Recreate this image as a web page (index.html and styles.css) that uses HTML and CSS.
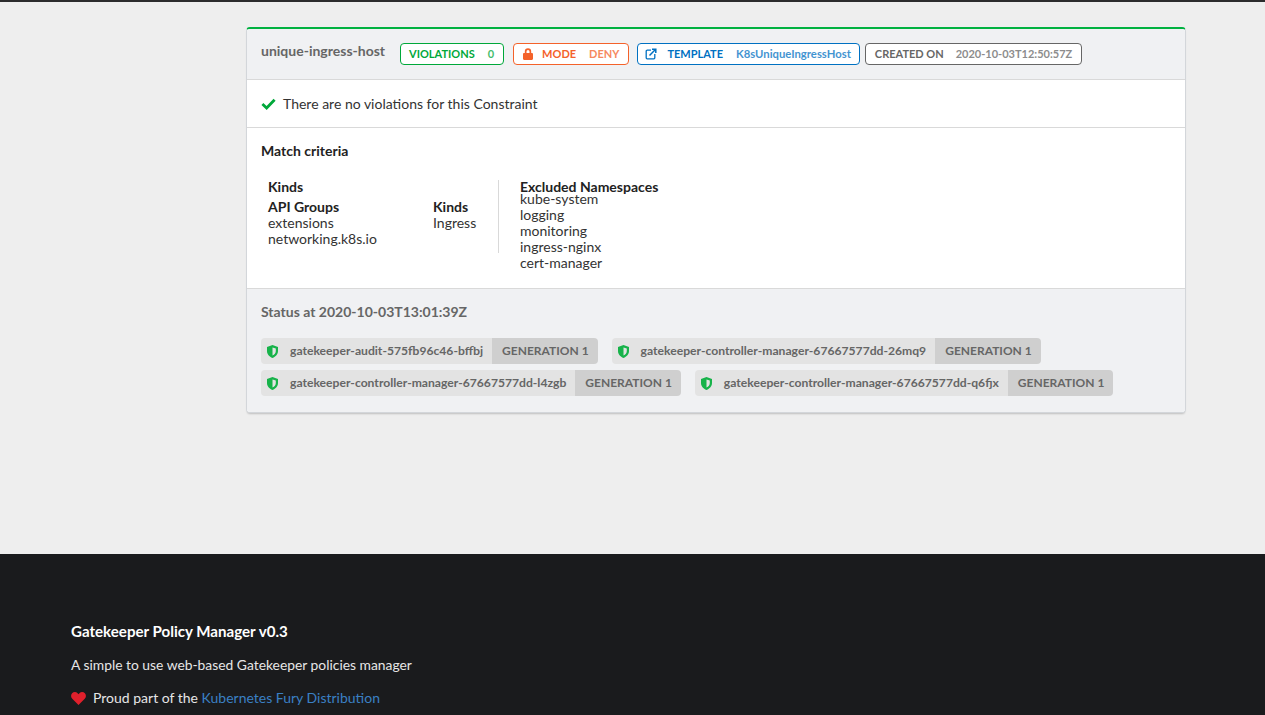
FILE: index.html
```html
<!DOCTYPE html>
<html lang="en">
  <head>
    <meta charset="UTF-8" />
    <meta name="viewport" content="width=device-width, initial-scale=1.0" />
    <title>Gatekeeper Policy Manager</title>
    <link rel="stylesheet" href="styles.css">
  </head>
  <body>
    <main class="content">
      <section class="panel">
        <header class="panel-head">
          <h2 class="panel-title">unique-ingress-host</h2>
          <div class="tags">
            <span class="tag tag-green"><b>VIOLATIONS</b><i>0</i></span>
            <span class="tag tag-orange">
              <svg class="tag-icon" viewBox="0 0 12 12"><path fill="currentColor" d="M2.800 5V3.400a3.200 3.200 0 0 1 6.400 0V5h.6c.7 0 1.200.5 1.200 1.200v4.600c0 .7-.5 1.200-1.200 1.200H2.200C1.500 12 1 11.500 1 10.800V6.200C1 5.500 1.500 5 2.200 5h.6zm1.700 0h3V3.400a1.500 1.500 0 0 0-3 0V5z"/></svg>
              <b>MODE</b><i>DENY</i>
            </span>
            <span class="tag tag-blue">
              <svg class="tag-icon" viewBox="0 0 12 12"><path fill="none" stroke="currentColor" stroke-width="1.300" d="M6 2.200H2.200a1 1 0 0 0-1 1v6.600a1 1 0 0 0 1 1h6.600a1 1 0 0 0 1-1V6"/><path fill="none" stroke="currentColor" stroke-width="1.500" d="M4.500 7.500L10.200 1.800M7 1.200h3.800V5"/></svg>
              <b>TEMPLATE</b><i>K8sUniqueIngressHost</i>
            </span>
            <span class="tag tag-gray"><b>CREATED ON</b><i>2020-10-03T12:50:57Z</i></span>
          </div>
        </header>

        <div class="panel-row no-violations">
          <svg class="check" viewBox="0 0 16 12"><path fill="none" stroke="currentColor" stroke-width="3" d="M1.500 6l4.500 4.300L14.500 1.500"/></svg>
          <span>There are no violations for this Constraint</span>
        </div>

        <div class="panel-row match">
          <h3 class="match-title">Match criteria</h3>
          <div class="match-body">
            <div class="kinds">
              <h4>Kinds</h4>
              <div class="kinds-cols">
                <div class="api-groups">
                  <h4>API Groups</h4>
                  <p>extensions</p>
                  <p>networking.k8s.io</p>
                </div>
                <div>
                  <h4>Kinds</h4>
                  <p>Ingress</p>
                </div>
              </div>
            </div>
            <div class="excluded">
              <h4>Excluded Namespaces</h4>
              <p>kube-system</p>
              <p>logging</p>
              <p>monitoring</p>
              <p>ingress-nginx</p>
              <p>cert-manager</p>
            </div>
          </div>
        </div>

        <div class="panel-status">
          <h3 class="status-title">Status at 2020-10-03T13:01:39Z</h3>
          <div class="pods">
            <span class="pod">
              <span class="pod-name"><svg class="shield" viewBox="0 0 12 14"><path fill="currentColor" d="M6 0l6 2v4.500C12 10 9.500 12.800 6 14 2.500 12.800 0 10 0 6.500V2zm0 2.600v8.800c2.100-.9 3.600-2.700 3.600-4.900V3.800z"/></svg>gatekeeper-audit-575fb96c46-bffbj</span>
              <span class="pod-gen">GENERATION 1</span>
            </span>
            <span class="pod">
              <span class="pod-name"><svg class="shield" viewBox="0 0 12 14"><path fill="currentColor" d="M6 0l6 2v4.500C12 10 9.500 12.800 6 14 2.500 12.800 0 10 0 6.500V2zm0 2.600v8.800c2.100-.9 3.600-2.700 3.600-4.900V3.800z"/></svg>gatekeeper-controller-manager-67667577dd-26mq9</span>
              <span class="pod-gen">GENERATION 1</span>
            </span>
            <span class="pod">
              <span class="pod-name"><svg class="shield" viewBox="0 0 12 14"><path fill="currentColor" d="M6 0l6 2v4.500C12 10 9.500 12.800 6 14 2.500 12.800 0 10 0 6.500V2zm0 2.600v8.800c2.100-.9 3.600-2.700 3.600-4.900V3.800z"/></svg>gatekeeper-controller-manager-67667577dd-l4zgb</span>
              <span class="pod-gen">GENERATION 1</span>
            </span>
            <span class="pod">
              <span class="pod-name"><svg class="shield" viewBox="0 0 12 14"><path fill="currentColor" d="M6 0l6 2v4.500C12 10 9.500 12.800 6 14 2.500 12.800 0 10 0 6.500V2zm0 2.600v8.800c2.100-.9 3.600-2.700 3.600-4.900V3.800z"/></svg>gatekeeper-controller-manager-67667577dd-q6fjx</span>
              <span class="pod-gen">GENERATION 1</span>
            </span>
          </div>
        </div>
      </section>
    </main>

    <footer class="footer">
      <p class="footer-title">Gatekeeper Policy Manager v0.3</p>
      <p class="footer-desc">A simple to use web-based Gatekeeper policies manager</p>
      <p class="footer-proud">
        <svg class="heart" viewBox="0 0 16 14"><path fill="currentColor" d="M8 14L1.300 7.300C-.4 5.500-.4 3 1.100 1.400 2.700-.3 5.400-.3 7 1.300l1 1 1-1c1.600-1.600 4.300-1.600 5.900.1 1.500 1.600 1.500 4.100-.2 5.900z"/></svg>
        <span>Proud part of the <a href="#">Kubernetes Fury Distribution</a></span>
      </p>
    </footer>
  </body>
</html>
```

FILE: styles.css
```css
* {
  box-sizing: border-box;
}

html,
body {
  height: 100%;
}

body {
  margin: 0;
  display: flex;
  flex-direction: column;
  height: 715px;
  overflow: hidden;
  background: #eee;
  border-top: 2px solid #2b2b2d;
  font-family: 'Lato', 'Liberation Sans', sans-serif;
  font-size: 14px;
  line-height: 16px;
  color: #333;
}

h2,
h3,
h4,
p {
  margin: 0;
}

.content {
  flex: 1;
  padding: 25px 79px 0 246px;
}

.panel {
  background: #fff;
  border: 1px solid #d3d6da;
  border-top: 2px solid #00b140;
  border-radius: 4px;
  box-shadow: 0 2px 2px -1px rgba(0, 0, 0, 0.2);
}

.panel-head {
  display: flex;
  align-items: center;
  height: 51px;
  padding: 0 14px;
  background: #f0f1f3;
  border-bottom: 1px solid #d9d9d9;
  border-radius: 3px 3px 0 0;
}

.panel-title {
  margin-top: -6px;
  font-size: 14px;
  font-weight: 700;
  color: #666;
}

.tags {
  display: flex;
  margin-left: 15px;
}

.tag {
  display: flex;
  align-items: center;
  height: 22px;
  padding: 0 8px;
  border: 1px solid currentColor;
  border-radius: 4px;
  background: #fff;
  font-size: 11px;
  white-space: nowrap;
}

.tag b {
  font-weight: 700;
}

.tag i {
  margin-left: 13px;
  font-style: normal;
  font-weight: 700;
  opacity: 0.75;
}

.tag-icon {
  width: 12px;
  height: 12px;
  margin-right: 8px;
}

.tag-green {
  padding-right: 9px;
  color: #00a83a;
}

.tag-orange {
  margin-left: 9px;
  padding-right: 9px;
  color: #f4622a;
}

.tag-blue {
  margin-left: 8px;
  padding: 0 8px 0 7px;
  color: #0071c2;
}

.tag-blue .tag-icon {
  margin-right: 10px;
}

.tag-blue i {
  font-size: 11.300px;
}

.tag-gray {
  margin-left: 5px;
  padding: 0 9px;
  color: #666;
}

.tag-gray i {
  margin-left: 12px;
}

.panel-row {
  padding: 0 14px;
  border-bottom: 1px solid #d9d9d9;
}

.no-violations {
  display: flex;
  align-items: center;
  height: 48px;
}

.check {
  width: 15px;
  height: 12px;
  margin-right: 7px;
  color: #00a83a;
}

.match {
  height: 161px;
  padding-top: 15px;
}

.match-title {
  font-size: 14px;
  font-weight: 700;
  color: #222;
}

.match-body {
  display: flex;
  align-items: flex-start;
  margin: 20px 0 0 7px;
}

.match-body h4 {
  font-size: 14px;
  font-weight: 700;
  line-height: 16px;
  color: #222;
}

.kinds {
  height: 73px;
  width: 231px;
  margin-top: 1px;
  border-right: 1px solid #d9d9d9;
}

.kinds > h4 {
  margin-top: -1px;
}

.kinds-cols {
  display: flex;
  margin-top: 4px;
}

.api-groups {
  width: 165px;
}

.excluded {
  margin-left: 21px;
}

.excluded h4 {
  margin-bottom: -4px;
}

.panel-status {
  padding: 15px 14px 16px;
  background: #f0f1f3;
  border-radius: 0 0 3px 3px;
}

.status-title {
  font-size: 14px;
  font-weight: 700;
  color: #666;
}

.pods {
  display: flex;
  flex-wrap: wrap;
  gap: 6px 14px;
  margin-top: 18px;
}

.pod {
  display: flex;
  height: 26px;
  border-radius: 4px;
  overflow: hidden;
  font-size: 12.150px;
  font-weight: 700;
  line-height: 26px;
  color: #666;
  white-space: nowrap;
}

.pod-name {
  display: flex;
  align-items: center;
  padding: 0 9px 0 6px;
  background: #e3e3e3;
}

.shield {
  width: 11px;
  height: 13px;
  margin-right: 12px;
  color: #17b34a;
}

.pod-gen {
  padding: 0 9px 0 10px;
  background: #cfcfcf;
  font-size: 12px;
}

.footer {
  height: 161px;
  padding: 69px 71px 0;
  background: #1a1b1d;
  color: #e6e6e6;
  font-size: 14px;
}

.footer-title {
  font-size: 15.100px;
  font-weight: 700;
  color: #fff;
}

.footer-desc {
  margin-top: 18px;
  font-size: 13.850px;
}

.footer-proud {
  display: flex;
  align-items: center;
  margin-top: 17px;
}

.heart {
  width: 15px;
  height: 13px;
  margin-right: 7px;
  color: #e0202c;
}

.footer a {
  color: #3a80c4;
  text-decoration: none;
}
```
